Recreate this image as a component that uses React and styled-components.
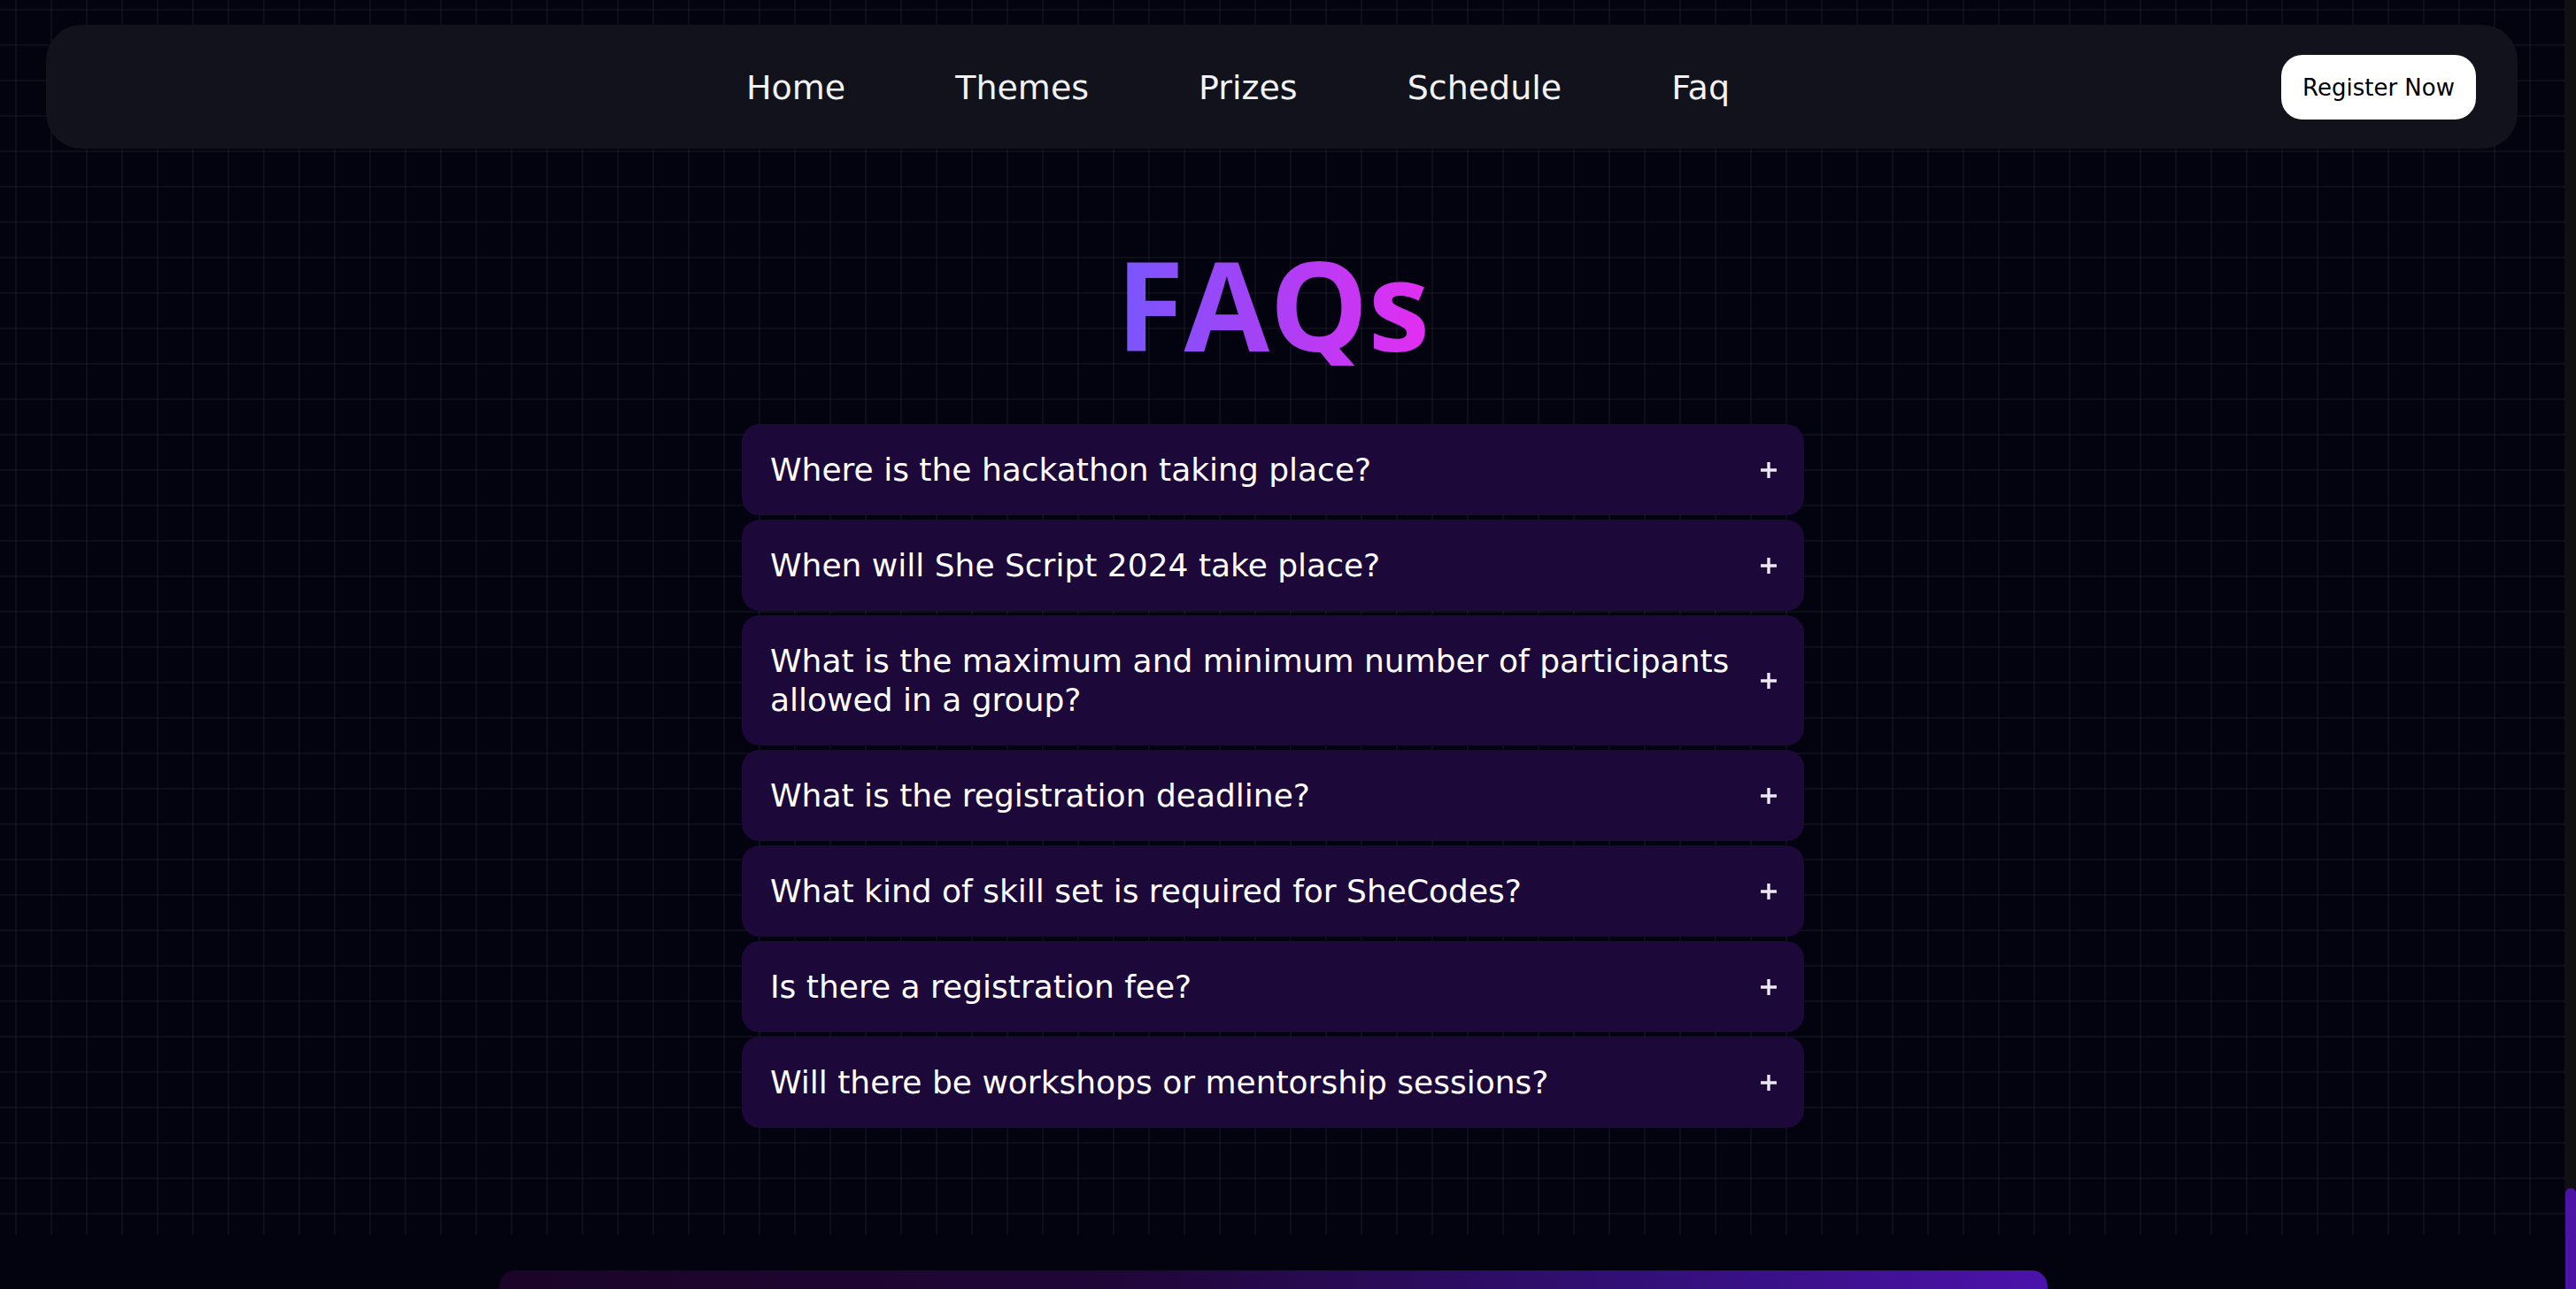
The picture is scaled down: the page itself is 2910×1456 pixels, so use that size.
import React from 'react';
import styled, { createGlobalStyle } from 'styled-components';

const GlobalStyle = createGlobalStyle`
  html, body {
    margin: 0;
    padding: 0;
    height: 100%;
    overflow: hidden;
    background: #02030f;
  }
  #root { height: 100%; }
  * { box-sizing: border-box; }
`;

const Shell = styled.div`
  display: flex;
  height: 100vh;
  overflow: hidden;
  background: #02030f;
`;

const Page = styled.main`
  flex: 1;
  min-width: 0;
  overflow: hidden;
`;

const Rail = styled.div`
  flex: none;
  width: 12px;
  height: 100vh;
  background: #101012;
  display: flex;
  flex-direction: column;
  justify-content: flex-end;
`;

const Thumb = styled.div`
  width: 12px;
  height: 114px;
  background: #4b14a6;
  border-radius: 6px 6px 0 0;
`;

const GridSection = styled.section`
  background-color: #02030f;
  background-image:
    linear-gradient(to bottom, rgba(255, 255, 255, 0.045) 2px, transparent 2px),
    linear-gradient(to right, rgba(255, 255, 255, 0.045) 2px, transparent 2px);
  background-size: 40px 40px;
  background-position: 17px 10px;
  padding: 28px 0 121px;
`;

const Nav = styled.nav`
  margin: 0 54px 0 52px;
  height: 140px;
  background: #11121b;
  border-radius: 40px;
  display: flex;
  align-items: center;
  padding: 0 47px 0 168px;
`;

const NavLinks = styled.div`
  flex: 1;
  display: flex;
  justify-content: center;
  gap: 124px;
  padding-top: 3px;
`;

const NavLink = styled.a`
  color: #f2f2f4;
  font-family: "DejaVu Sans", sans-serif;
  font-size: 38px;
  line-height: 1.2;
  text-decoration: none;
`;

const RegisterButton = styled.button`
  width: 220px;
  height: 73px;
  background: #ffffff;
  color: #000000;
  border: none;
  border-radius: 24px;
  font-family: "DejaVu Sans", sans-serif;
  font-size: 26px;
  padding: 2px 0 0;
  cursor: pointer;
`;

const Body = styled.div`
  padding-right: 22px;
`;

const Title = styled.h1`
  width: fit-content;
  margin: 105px auto 66px;
  font-family: "Open Sans", "Noto Sans", sans-serif;
  font-weight: 700;
  font-size: 140px;
  line-height: 140px;
  background: linear-gradient(90deg, #7757fe 0%, #a442f5 45%, #e42df2 100%);
  -webkit-background-clip: text;
  background-clip: text;
  color: transparent;
`;

const List = styled.div`
  width: 1200px;
  margin: 0 auto;
  display: flex;
  flex-direction: column;
  gap: 5px;
`;

const Item = styled.div`
  background: #1c0839;
  border-radius: 20px;
  padding: 30px 30px 29px 32px;
  display: flex;
  align-items: center;
  gap: 16px;
  cursor: pointer;
`;

const Question = styled.span`
  flex: 1;
  color: #ffffff;
  font-family: "DejaVu Sans", sans-serif;
  font-size: 36px;
  line-height: 44px;
`;

const PlusIcon = styled.svg`
  flex: none;
  width: 20px;
  height: 20px;
`;

const Footer = styled.section`
  padding: 40px 22px 0 0;
  background: #02030f;
`;

const Card = styled.div`
  width: 1749px;
  height: 320px;
  margin: 0 auto;
  border-radius: 18px;
  background: linear-gradient(90deg, #1b0427 0%, #200638 40%, #33107a 75%, #4c12ab 100%);
`;

const faqs = [
  'Where is the hackathon taking place?',
  'When will She Script 2024 take place?',
  'What is the maximum and minimum number of participants allowed in a group?',
  'What is the registration deadline?',
  'What kind of skill set is required for SheCodes?',
  'Is there a registration fee?',
  'Will there be workshops or mentorship sessions?',
];

const links = ['Home', 'Themes', 'Prizes', 'Schedule', 'Faq'];

const Plus = () => (
  <PlusIcon viewBox="0 0 20 20" aria-hidden="true">
    <path d="M10 1v18M1 10h18" stroke="#ece8f2" strokeWidth="3.4" strokeLinecap="butt" fill="none" />
  </PlusIcon>
);

export default function App() {
  return (
    <>
      <GlobalStyle />
      <Shell>
        <Page>
          <GridSection>
            <Nav>
              <NavLinks>
                {links.map((l) => (
                  <NavLink key={l} href="#">{l}</NavLink>
                ))}
              </NavLinks>
              <RegisterButton>Register Now</RegisterButton>
            </Nav>
            <Body>
              <Title>FAQs</Title>
              <List>
                {faqs.map((q) => (
                  <Item key={q}>
                    <Question>{q}</Question>
                    <Plus />
                  </Item>
                ))}
              </List>
            </Body>
          </GridSection>
          <Footer>
            <Card />
          </Footer>
        </Page>
        <Rail>
          <Thumb />
        </Rail>
      </Shell>
    </>
  );
}
